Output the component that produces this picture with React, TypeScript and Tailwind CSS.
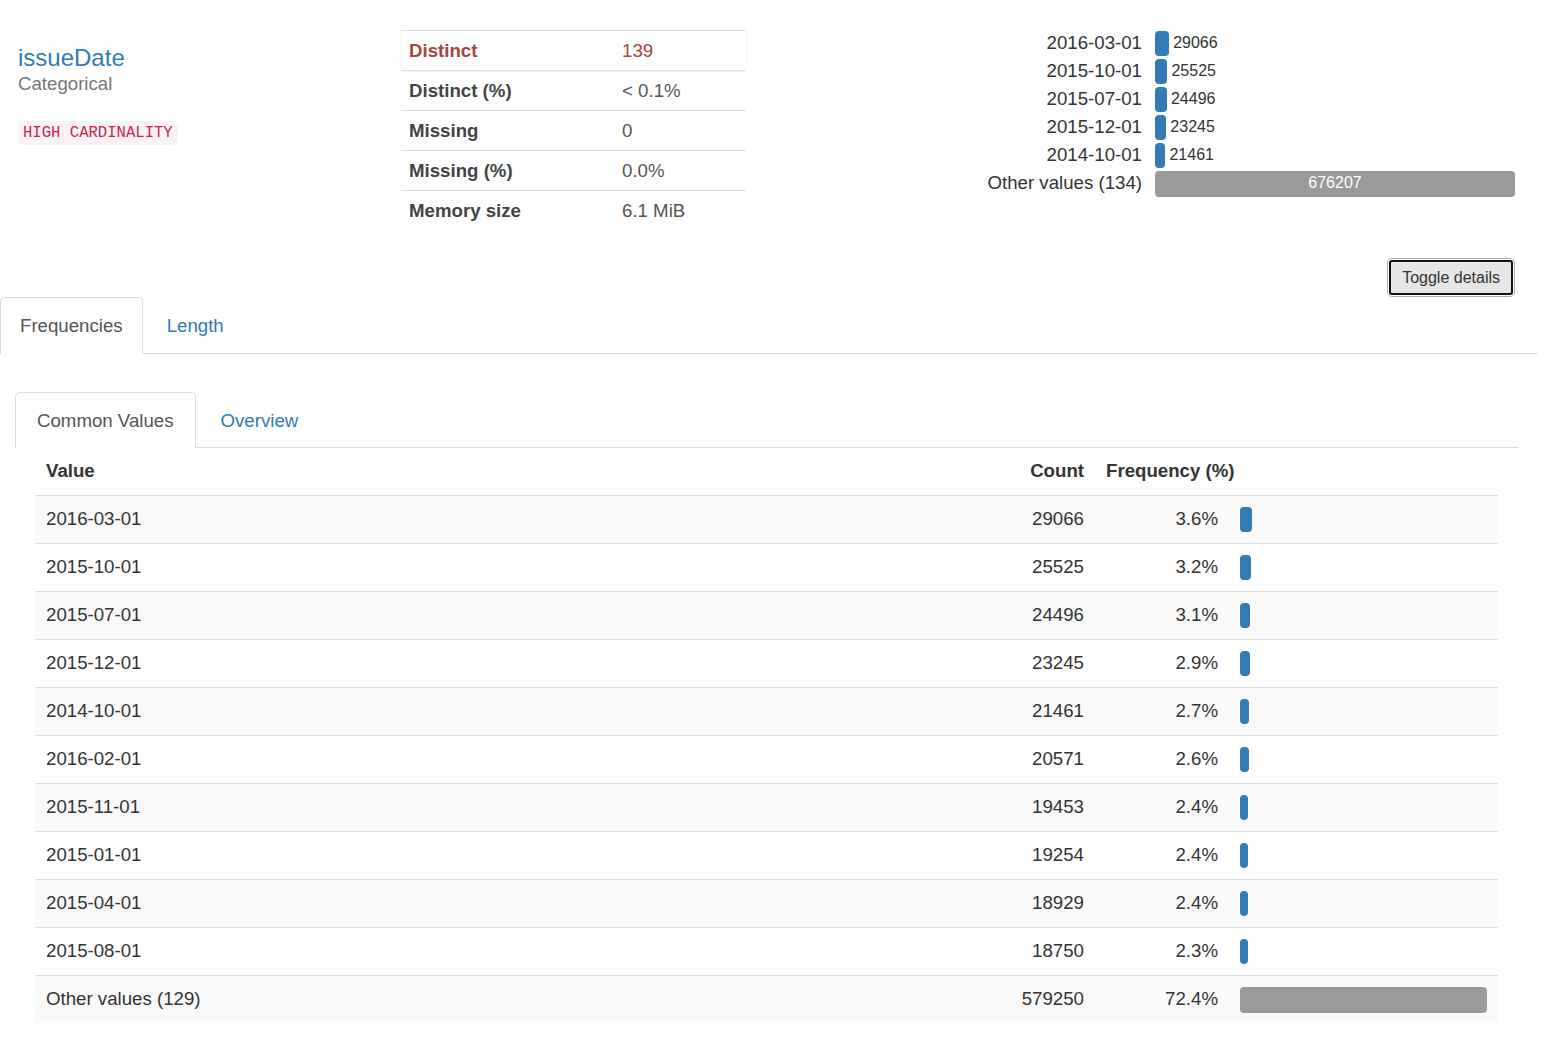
import React from "react";

const summary = [
  { label: "Distinct", value: "139", alert: true },
  { label: "Distinct (%)", value: "< 0.1%" },
  { label: "Missing", value: "0" },
  { label: "Missing (%)", value: "0.0%" },
  { label: "Memory size", value: "6.1 MiB" },
];

const mini = [
  { label: "2016-03-01", count: 29066 },
  { label: "2015-10-01", count: 25525 },
  { label: "2015-07-01", count: 24496 },
  { label: "2015-12-01", count: 23245 },
  { label: "2014-10-01", count: 21461 },
];

const freqs = [
  { value: "2016-03-01", count: 29066, pct: "3.6%" },
  { value: "2015-10-01", count: 25525, pct: "3.2%" },
  { value: "2015-07-01", count: 24496, pct: "3.1%" },
  { value: "2015-12-01", count: 23245, pct: "2.9%" },
  { value: "2014-10-01", count: 21461, pct: "2.7%" },
  { value: "2016-02-01", count: 20571, pct: "2.6%" },
  { value: "2015-11-01", count: 19453, pct: "2.4%" },
  { value: "2015-01-01", count: 19254, pct: "2.4%" },
  { value: "2015-04-01", count: 18929, pct: "2.4%" },
  { value: "2015-08-01", count: 18750, pct: "2.3%" },
];

const OTHER_MINI = 676207;
const OTHER_MAIN = 579250;

function Overview() {
  return (
    <div className="flex h-[250px] items-start">
      <div className="w-[401px] pl-[18px] pt-[45px]">
        <div className="text-[24px] leading-[26.4px] text-[#337ab7]">issueDate</div>
        <div className="text-[18.67px] leading-[26.67px] text-[#777]">Categorical</div>
        <div className="mt-[20px]">
          <code className="inline-block rounded-[5px] bg-[#f9f2f4] px-[5px] py-[2px] font-['Liberation_Mono',monospace] text-[15.6px] leading-[20px] text-[#c7254e]">
            HIGH CARDINALITY
          </code>
        </div>
      </div>

      <div className="w-[345px] pt-[30px]">
        {summary.map((r) => (
          <div
            key={r.label}
            className={`flex h-[40px] items-center border-t border-[#ddd] px-[8px] pt-px ${
              r.alert ? "shadow-[0_1px_3px_rgba(0,0,0,0.08)]" : ""
            }`}
          >
            <div className={`w-[213px] font-bold ${r.alert ? "text-[#a94442]" : "text-[#444]"}`}>{r.label}</div>
            <div className={r.alert ? "text-[#a94442]" : "text-[#555]"}>{r.value}</div>
          </div>
        ))}
      </div>

      <div className="flex flex-1 items-start justify-end pr-[23px] pt-[29px]">
        <div className="grid grid-cols-[auto_360px] gap-x-[13px]">
          {mini.map((m) => (
            <React.Fragment key={m.label}>
              <div className="flex h-[28px] items-center justify-end text-[#333]">{m.label}</div>
              <div className="flex h-[28px] items-center gap-[4px]">
                <div
                  className="h-[25px] rounded-[4px] bg-[#337ab7]"
                  style={{ width: `${(m.count / OTHER_MINI) * 330}px` }}
                />
                <span className="text-[16px] leading-[20px] text-[#333]">{m.count}</span>
              </div>
            </React.Fragment>
          ))}
          <div className="flex h-[28px] items-center justify-end text-[#333]">Other values (134)</div>
          <div className="flex h-[28px] items-center pt-px">
            <div className="flex h-[26px] w-full items-center justify-center rounded-[4px] bg-[#999] text-[16px] text-white">
              676207
            </div>
          </div>
        </div>
      </div>
    </div>
  );
}

function FreqTable() {
  return (
    <div className="ml-[35px] w-[1463px]">
      <div className="grid h-[47px] grid-cols-[1fr_120px_134px_269px] items-center font-bold text-[#333]">
        <div className="px-[11px]">Value</div>
        <div className="px-[11px] text-right">Count</div>
        <div className="col-span-2 px-[11px]">Frequency (%)</div>
      </div>
      {freqs.map((f, i) => (
        <div
          key={f.value}
          className={`grid h-[48px] grid-cols-[1fr_120px_134px_269px] items-center border-t border-[#ddd] text-[#333] ${
            i % 2 === 0 ? "bg-[#f9f9f9]" : "bg-white"
          }`}
        >
          <div className="px-[11px]">{f.value}</div>
          <div className="px-[11px] text-right">{f.count}</div>
          <div className="px-[11px] text-right">{f.pct}</div>
          <div className="px-[11px]">
            <div
              className="h-[25px] rounded-[4px] bg-[#337ab7]"
              style={{ width: `${(f.count / OTHER_MAIN) * 247}px` }}
            />
          </div>
        </div>
      ))}
      <div className="grid h-[48px] grid-cols-[1fr_120px_134px_269px] items-center border-t border-[#ddd] bg-[#f9f9f9] text-[#333]">
        <div className="px-[11px]">Other values (129)</div>
        <div className="px-[11px] text-right">579250</div>
        <div className="px-[11px] text-right">72.4%</div>
        <div className="px-[11px]">
          <div className="h-[26px] w-[247px] rounded-[4px] bg-[#999]" />
        </div>
      </div>
    </div>
  );
}

export default function App() {
  return (
    <div className="w-[1538px] bg-white font-['Liberation_Sans',Arial,sans-serif] text-[18.67px] leading-[26.67px] text-[#333]">
      <Overview />

      <div className="mt-[8px] flex justify-end pr-[23px]">
        <div className="rounded-[5px] border border-[#adadad] p-px">
          <button className="h-[35px] rounded-[3px] border-2 border-[#111] bg-[#e6e6e6] px-[11px] text-[16px] leading-[20px] text-[#333]">
            Toggle details
          </button>
        </div>
      </div>

      <div className="flex border-b border-[#ddd]">
        <div className="-mb-px h-[57px] rounded-t-[5px] border border-b-0 border-[#ddd] bg-white px-[19px] pt-[15px] text-[#555]">
          Frequencies
        </div>
        <div className="ml-[3px] px-[21px] pt-[16px] text-[#337ab7]">Length</div>
      </div>

      <div className="ml-[15px] mt-[38px] w-[1503px]">
        <div className="flex border-b border-[#ddd]">
          <div className="-mb-px h-[56px] rounded-t-[5px] border border-b-0 border-[#ddd] bg-white px-[21px] pt-[15px] text-[#555]">
            Common Values
          </div>
          <div className="ml-[3px] px-[22px] pt-[16px] text-[#337ab7]">Overview</div>
        </div>
      </div>

      <FreqTable />
    </div>
  );
}
